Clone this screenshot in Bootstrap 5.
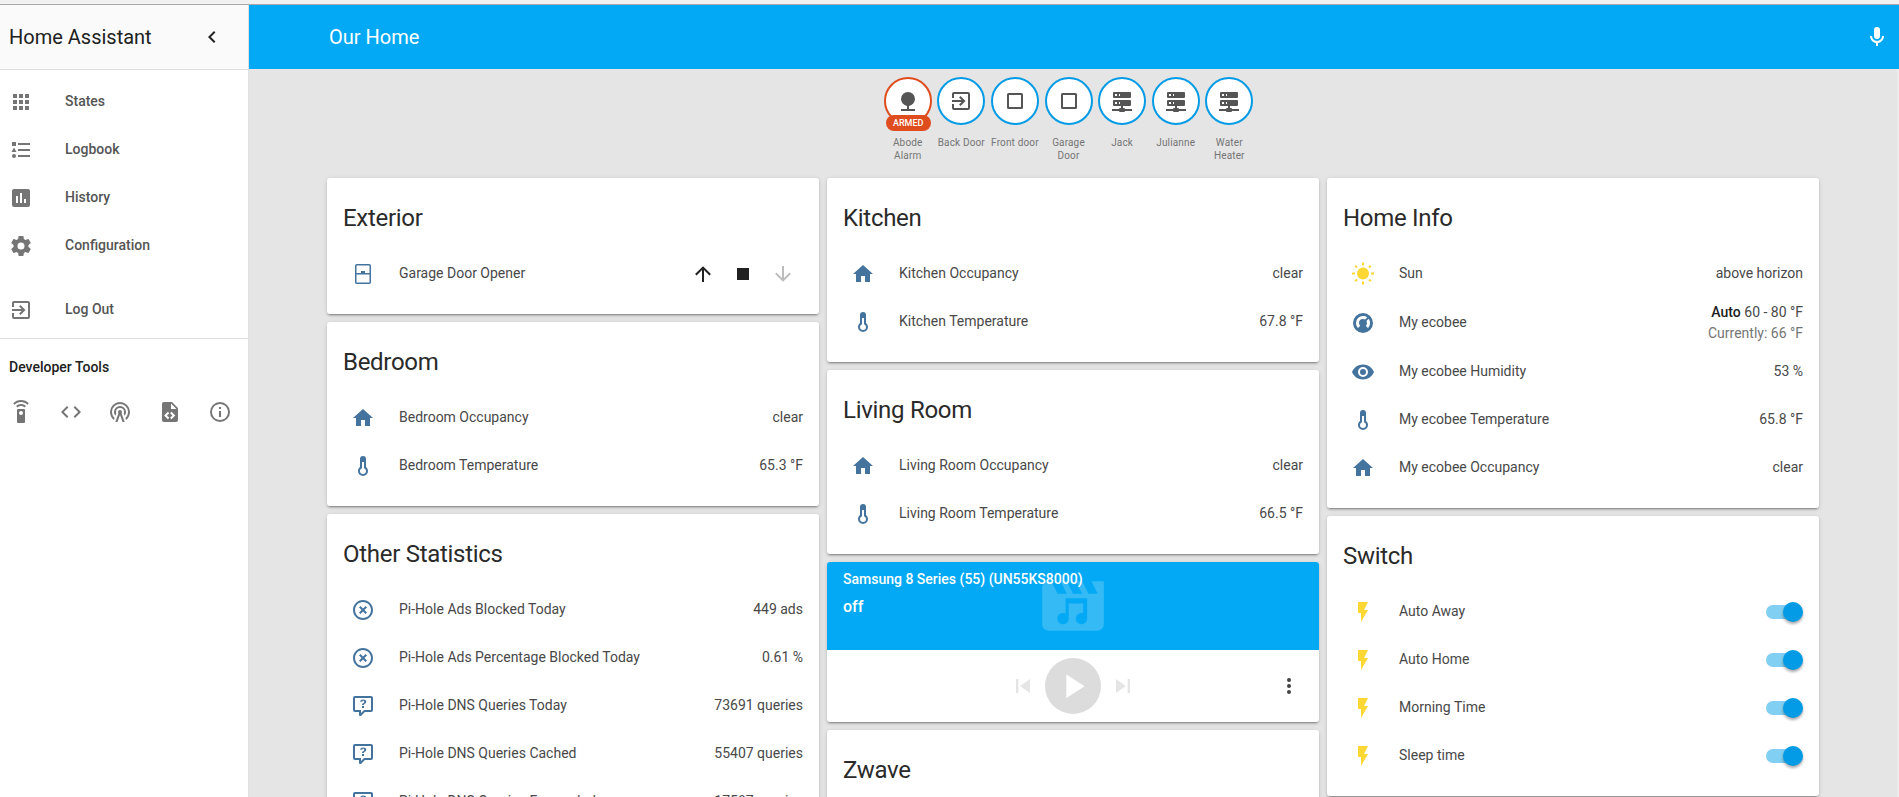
<!DOCTYPE html>
<html lang="en">
<head>
  <meta charset="UTF-8" />
  <meta name="viewport" content="width=device-width, initial-scale=1" />
  <title>Our Home - Home Assistant</title>
  <link href="https://cdn.jsdelivr.net/npm/bootstrap@5.3.3/dist/css/bootstrap.min.css" rel="stylesheet" />
  <style>
    html, body { height: 100%; overflow: hidden; }
    body { font-family: Roboto, "Liberation Sans", sans-serif; font-size: 14px; color: #212121; background: #e5e5e5; }
    .topline { height: 5px; background: #f1f1f1; border-bottom: 1px solid #a9a9a9; flex: none; }
    .shell { height: calc(100vh - 5px); }
    .ic { width: 24px; height: 24px; fill: currentColor; flex: none; display: block; }

    .side { width: 249px; flex: none; background: #fff; border-right: 1px solid #e0e0e0; }
    .side-head { height: 65px; background: #fafafa; border-bottom: 1px solid #e0e0e0; padding: 0 24px 0 9px; font-size: 20px; }
    .side-head .ic { color: #212121; }
    .side-nav { padding-top: 8px; }
    .nav-row { height: 48px; padding-left: 9px; color: #555; font-weight: 500; font-size: 14px; }
    .nav-row .ic { color: #757575; margin-right: 32px; }
    .nav-row span { margin-bottom: 2px; }
    .nav-gap { height: 16px; }
    .side-sep { border-top: 1px solid #e0e0e0; margin-top: 4px; }
    .dev-title { font-weight: 500; padding: 18px 9px 0; line-height: 20px; }
    .dev-icons { padding: 23px 0 0 9px; gap: 25.7px; color: #757575; }

    .main-pane { min-width: 0; }
    .blue-bar { height: 64px; background: #03a9f4; color: #fff; padding: 0 10px 0 80px; font-size: 20px; flex: none; }
    .pane-body { padding: 8px 78px 0 78px; border-right: 2px solid #ececec; flex-grow: 1; }

    .badge-row { gap: 5.6px; padding-right: 9px; margin-bottom: 16px; }
    .state-badge { width: 48px; text-align: center; }
    .badge-ring { width: 48px; height: 48px; border: 2px solid #039be5; border-radius: 50%; background: #fff; color: #555; position: relative; }
    .badge-ring.is-alarm { border-color: #df4c1e; }
    .badge-tag { position: absolute; left: 0; right: -1px; bottom: -8px; height: 16px; line-height: 16px; border-radius: 8px; background: #df4c1e; color: #fff; font-size: 9px; font-weight: 500; }
    .badge-name { font-size: 10px; line-height: 13px; letter-spacing: .15px; color: #757575; margin-top: 11px; }

    .col-wrap { gap: 8px; }
    .tile-col { width: 492px; flex: none; gap: 8px; }
    .tile { border: 0; border-radius: 3px; box-shadow: 0 2px 2px rgba(0,0,0,.14), 0 1px 5px rgba(0,0,0,.12), 0 3px 1px -2px rgba(0,0,0,.2); }
    .tile-title { font-size: 24px; line-height: 32px; letter-spacing: -.012em; padding: 24px 16px 16px; color: #2a2a2a; }
    .tile-body { padding: 0 16px 16px; color: #484848; }
    .ent-row { height: 48px; }
    .ent-row.is-tall { height: 50px; }
    .ent-row > span { margin-bottom: 2px; }
    .ent-icon { width: 40px; flex: none; color: #44739e; margin-right: 16px; }
    .ent-icon.is-yellow { color: #fdd835; }
    .ent-val { margin-left: auto; text-align: right; }
    .clim-val { line-height: 21px; }
    .clim-val b { font-weight: 500; color: #212121; }
    .clim-now { color: #757575; }
    .cover-btns { margin-left: auto; margin-right: 8px; gap: 16px; color: #212121; }
    .cover-btns .off { color: #bdbdbd; }

    .tog-track { width: 34px; height: 14px; border-radius: 7px; background: #81cff3; position: relative; margin-right: 3px; margin-left: auto; }
    .tog-thumb { position: absolute; right: -3px; top: -3px; width: 20px; height: 20px; border-radius: 50%; background: #039be5; box-shadow: 0 2px 3px rgba(0,0,0,.35); }

    .media-top { height: 88px; background: #03a9f4; color: #fff; padding: 8px 16px; position: relative; font-weight: 500; border-radius: 3px 3px 0 0; }
    .media-name { line-height: 18px; position: relative; }
    .media-state { font-size: 16px; line-height: 24px; margin-top: 7px; position: relative; }
    .media-art { position: absolute; left: 209px; top: 7px; width: 74px; height: 74px; fill: rgba(255,255,255,.2); }
    .media-ctl { height: 72px; position: relative; color: #e5e5e5; gap: 8px; }
    .media-ctl > .ic { width: 28px; height: 28px; }
    .play-disc { width: 56px; height: 56px; border-radius: 50%; background: #dcdcdc; color: #fff; }
    .play-disc .ic { width: 40px; height: 40px; }
    .media-ctl > .media-more { position: absolute; right: 18px; top: 24px; width: 24px; height: 24px; color: #424242; }
  </style>
</head>
<body class="d-flex flex-column">
  <svg width="0" height="0" class="position-absolute">
    <symbol id="i-apps" viewBox="0 0 24 24"><path d="M4,8H8V4H4V8M10,20H14V16H10V20M4,20H8V16H4V20M4,14H8V10H4V14M10,14H14V10H10V14M16,4V8H20V4H16M10,8H14V4H10V8M16,14H20V10H16V14M16,20H20V16H16V20Z"/></symbol>
    <symbol id="i-list" viewBox="0 0 24 24"><path d="M5,9.5L7.5,14H2.5L5,9.5M3,4H7V8H3V4M5,20A2,2 0 0,0 7,18A2,2 0 0,0 5,16A2,2 0 0,0 3,18A2,2 0 0,0 5,20M9,5V7H21V5H9M9,19H21V17H9V19M9,13H21V11H9V13Z"/></symbol>
    <symbol id="i-poll" viewBox="0 0 24 24"><path d="M17,17H15V13H17M13,17H11V7H13M9,17H7V10H9M19,3H5C3.89,3 3,3.89 3,5V19A2,2 0 0,0 5,21H19A2,2 0 0,0 21,19V5C21,3.89 20.1,3 19,3Z"/></symbol>
    <symbol id="i-gear" viewBox="0 0 24 24"><path d="M12,15.5A3.5,3.5 0 0,1 8.5,12A3.5,3.5 0 0,1 12,8.5A3.5,3.5 0 0,1 15.5,12A3.5,3.5 0 0,1 12,15.5M19.43,12.97C19.47,12.65 19.5,12.33 19.5,12C19.5,11.67 19.47,11.34 19.43,11L21.54,9.37C21.73,9.22 21.78,8.95 21.66,8.73L19.66,5.27C19.54,5.05 19.27,4.96 19.05,5.05L16.56,6.05C16.04,5.66 15.5,5.32 14.87,5.07L14.5,2.42C14.46,2.18 14.25,2 14,2H10C9.75,2 9.54,2.18 9.5,2.42L9.13,5.07C8.5,5.32 7.96,5.66 7.44,6.05L4.95,5.05C4.73,4.96 4.46,5.05 4.34,5.27L2.34,8.73C2.21,8.95 2.27,9.22 2.46,9.37L4.57,11C4.53,11.34 4.5,11.67 4.5,12C4.5,12.33 4.53,12.65 4.57,12.97L2.46,14.63C2.27,14.78 2.21,15.05 2.34,15.27L4.34,18.73C4.46,18.95 4.73,19.03 4.95,18.95L7.44,17.94C7.96,18.34 8.5,18.68 9.13,18.93L9.5,21.58C9.54,21.82 9.75,22 10,22H14C14.25,22 14.46,21.82 14.5,21.58L14.87,18.93C15.5,18.67 16.04,18.34 16.56,17.94L19.05,18.95C19.27,19.03 19.54,18.95 19.66,18.73L21.66,15.27C21.78,15.05 21.73,14.78 21.54,14.63L19.43,12.97Z"/></symbol>
    <symbol id="i-exit" viewBox="0 0 24 24"><path d="M19,3H5C3.89,3 3,3.89 3,5V9H5V5H19V19H5V15H3V19A2,2 0 0,0 5,21H19A2,2 0 0,0 21,19V5C21,3.89 20.1,3 19,3M10.08,15.58L11.5,17L16.5,12L11.5,7L10.08,8.41L12.67,11H3V13H12.67L10.08,15.58Z"/></symbol>
    <symbol id="i-remote" viewBox="0 0 24 24"><path d="M12,0C8.96,0 6.21,1.23 4.22,3.22L5.63,4.63C7.26,3 9.5,2 12,2C14.5,2 16.74,3 18.36,4.64L19.77,3.23C17.79,1.23 15.04,0 12,0M7.05,6.05L8.46,7.46C9.37,6.56 10.62,6 12,6C13.38,6 14.63,6.56 15.53,7.46L16.94,6.05C15.68,4.78 13.93,4 12,4C10.07,4 8.32,4.78 7.05,6.05M15,9H9A1,1 0 0,0 8,10V22A1,1 0 0,0 9,23H15A1,1 0 0,0 16,22V10A1,1 0 0,0 15,9M12,15A2,2 0 0,1 10,13A2,2 0 0,1 12,11A2,2 0 0,1 14,13A2,2 0 0,1 12,15Z"/></symbol>
    <symbol id="i-code" viewBox="0 0 24 24"><path d="M14.6,16.6L19.2,12L14.6,7.4L16,6L22,12L16,18L14.6,16.6M9.4,16.6L4.8,12L9.4,7.4L8,6L2,12L8,18L9.4,16.6Z"/></symbol>
    <symbol id="i-tower" viewBox="0 0 24 24"><path d="M12,10A2,2 0 0,1 14,12C14,12.5 13.82,12.94 13.53,13.29L16.7,22H14.57L12,14.93L9.43,22H7.3L10.47,13.29C10.18,12.94 10,12.5 10,12A2,2 0 0,1 12,10M12,8A4,4 0 0,0 8,12C8,12.5 8.1,13 8.28,13.46L7.4,15.86C6.53,14.81 6,13.47 6,12A6,6 0 0,1 12,6A6,6 0 0,1 18,12C18,13.47 17.47,14.81 16.6,15.86L15.72,13.46C15.9,13 16,12.5 16,12A4,4 0 0,0 12,8M12,4A8,8 0 0,0 4,12C4,14.36 5,16.5 6.64,17.94L5.92,19.94C3.54,18.11 2,15.23 2,12A10,10 0 0,1 12,2A10,10 0 0,1 22,12C22,15.23 20.46,18.11 18.08,19.94L17.36,17.94C19,16.5 20,14.36 20,12A8,8 0 0,0 12,4Z"/></symbol>
    <symbol id="i-filexml" viewBox="0 0 24 24"><path d="M13,9H18.5L13,3.5V9M6,2H14L20,8V20A2,2 0 0,1 18,22H6C4.89,22 4,21.1 4,20V4C4,2.89 4.89,2 6,2M6.12,15.5L9.86,19.24L11.28,17.83L8.95,15.5L11.28,13.17L9.86,11.76L6.12,15.5M17.28,15.5L13.54,11.76L12.12,13.17L14.45,15.5L12.12,17.83L13.54,19.24L17.28,15.5Z"/></symbol>
    <symbol id="i-info" viewBox="0 0 24 24"><path d="M11,9H13V7H11M12,20C7.59,20 4,16.41 4,12C4,7.59 7.59,4 12,4C16.41,4 20,7.59 20,12C20,16.41 16.41,20 12,20M12,2A10,10 0 0,0 2,12A10,10 0 0,0 12,22A10,10 0 0,0 22,12A10,10 0 0,0 12,2M11,17H13V11H11V17Z"/></symbol>
    <symbol id="i-chev" viewBox="0 0 24 24"><path d="M15.41,16.58L10.83,12L15.41,7.41L14,6L8,12L14,18L15.41,16.58Z"/></symbol>
    <symbol id="i-mic" viewBox="0 0 24 24"><path d="M12,2A3,3 0 0,1 15,5V11A3,3 0 0,1 12,14A3,3 0 0,1 9,11V5A3,3 0 0,1 12,2M19,11C19,14.53 16.39,17.44 13,17.93V21H11V17.93C7.61,17.44 5,14.53 5,11H7A5,5 0 0,0 12,16A5,5 0 0,0 17,11H19Z"/></symbol>
    <symbol id="i-cam" viewBox="0 0 24 24"><path d="M12,3A7,7 0 0,1 19,10A7,7 0 0,1 13,16.93V20H19V22H5V20H11V16.93A7,7 0 0,1 5,10A7,7 0 0,1 12,3Z"/></symbol>
    <symbol id="i-square" viewBox="0 0 24 24"><path d="M5.5,4H18.5A1.5,1.5 0 0,1 20,5.5V18.5A1.5,1.5 0 0,1 18.5,20H5.5A1.5,1.5 0 0,1 4,18.5V5.5A1.5,1.5 0 0,1 5.5,4M6,6V18H18V6H6Z"/></symbol>
    <symbol id="i-server" viewBox="0 0 24 24"><path d="M13,19H14A1,1 0 0,1 15,20H22V22H15A1,1 0 0,1 14,23H10A1,1 0 0,1 9,22H2V20H9A1,1 0 0,1 10,19H11V17H4A1,1 0 0,1 3,16V12A1,1 0 0,1 4,11H20A1,1 0 0,1 21,12V16A1,1 0 0,1 20,17H13V19M4,3H20A1,1 0 0,1 21,4V8A1,1 0 0,1 20,9H4A1,1 0 0,1 3,8V4A1,1 0 0,1 4,3M9,7H10V5H9V7M9,15H10V13H9V15M5,5V7H7V5H5M5,13V15H7V13H5Z"/></symbol>
    <symbol id="i-garage" viewBox="0 0 24 24"><rect x="4.75" y="2.75" width="14.5" height="18.5" rx="1" fill="none" stroke="currentColor" stroke-width="1.5"/><path d="M4,11H10V9H14V11H20V12.5H4Z"/></symbol>
    <symbol id="i-up" viewBox="0 0 24 24"><path d="M13,20H11V8L5.5,13.5L4.08,12.08L12,4.16L19.92,12.08L18.5,13.5L13,8V20Z"/></symbol>
    <symbol id="i-stop" viewBox="0 0 24 24"><path d="M18,18H6V6H18V18Z"/></symbol>
    <symbol id="i-down" viewBox="0 0 24 24"><path d="M11,4H13V16L18.5,10.5L19.92,11.92L12,19.84L4.08,11.92L5.5,10.5L11,16V4Z"/></symbol>
    <symbol id="i-home" viewBox="0 0 24 24"><path d="M10,20V14H14V20H19V12H22L12,3L2,12H5V20H10Z"/></symbol>
    <symbol id="i-temp" viewBox="0 0 24 24"><path d="M17,17A5,5 0 0,1 12,22A5,5 0 0,1 7,17C7,15.36 7.79,13.91 9,13V5A3,3 0 0,1 12,2A3,3 0 0,1 15,5V13C16.21,13.91 17,15.36 17,17M11,8V14.17C9.83,14.58 9,15.69 9,17A3,3 0 0,0 12,20A3,3 0 0,0 15,17C15,15.69 14.17,14.58 13,14.17V8H11Z"/></symbol>
    <symbol id="i-close" viewBox="0 0 24 24"><path d="M12,20C7.59,20 4,16.41 4,12C4,7.59 7.59,4 12,4C16.41,4 20,7.59 20,12C20,16.41 16.41,20 12,20M12,2C6.47,2 2,6.47 2,12C2,17.53 6.47,22 12,22C17.53,22 22,17.53 22,12C22,6.47 17.53,2 12,2M14.59,8L12,10.59L9.41,8L8,9.41L10.59,12L8,14.59L9.41,16L12,13.41L14.59,16L16,14.59L13.41,12L16,9.41L14.59,8Z"/></symbol>
    <symbol id="i-ask" viewBox="0 0 24 24"><path d="M4,2A2,2 0 0,0 2,4V16A2,2 0 0,0 4,18H8V21A1,1 0 0,0 9,22H9.5C9.75,22 10,21.9 10.2,21.71L13.9,18H20A2,2 0 0,0 22,16V4C22,2.89 21.1,2 20,2H4M4,4H20V16H13.08L10,19.08V16H4V4M12.19,5.5C11.3,5.5 10.59,5.68 10.05,6.04C9.5,6.4 9.22,7 9.27,7.69H11.24C11.24,7.41 11.34,7.2 11.5,7.06C11.7,6.92 11.92,6.85 12.19,6.85C12.5,6.85 12.77,6.93 12.95,7.11C13.13,7.28 13.22,7.5 13.22,7.8C13.22,8.08 13.14,8.33 13,8.54C12.83,8.76 12.62,8.94 12.36,9.08C11.84,9.4 11.5,9.68 11.29,9.92C11.1,10.16 11,10.5 11,11H13C13,10.72 13.05,10.5 13.14,10.32C13.23,10.15 13.4,10 13.66,9.85C14.12,9.64 14.5,9.36 14.79,9C15.08,8.63 15.23,8.24 15.23,7.8C15.23,7.1 14.95,6.54 14.4,6.12C13.85,5.71 13.11,5.5 12.19,5.5M11,12V14H13V12H11Z"/></symbol>
    <symbol id="i-sun" viewBox="0 0 24 24"><path d="M3.55,18.54L4.96,19.95L6.76,18.16L5.34,16.74M11,22.45H13V19.5H11M12,5.5A6,6 0 0,0 6,11.5A6,6 0 0,0 12,17.5A6,6 0 0,0 18,11.5C18,8.18 15.31,5.5 12,5.5M20,12.5H23V10.5H20M17.24,18.16L19.04,19.95L20.45,18.54L18.66,16.74M20.45,4.46L19.04,3.05L17.24,4.84L18.66,6.26M13,0.55H11V3.5H13M4,10.5H1V12.5H4M6.76,4.84L4.96,3.05L3.55,4.46L5.34,6.26L6.76,4.84Z"/></symbol>
    <symbol id="i-nest" viewBox="0 0 24 24"><path d="M16.95,16.95L14.83,14.83C15.55,14.1 16,13.1 16,12C16,11.26 15.79,10.57 15.43,10L17.6,7.81C18.5,9 19,10.43 19,12C19,13.93 18.22,15.68 16.95,16.95M12,5C13.57,5 15,5.5 16.19,6.4L14,8.56C13.43,8.21 12.74,8 12,8A4,4 0 0,0 8,12C8,13.1 8.45,14.1 9.17,14.83L7.05,16.95C5.78,15.68 5,13.93 5,12A7,7 0 0,1 12,5M12,2A10,10 0 0,0 2,12A10,10 0 0,0 12,22A10,10 0 0,0 22,12A10,10 0 0,0 12,2Z"/></symbol>
    <symbol id="i-eye" viewBox="0 0 24 24"><path d="M12,9A3,3 0 0,0 9,12A3,3 0 0,0 12,15A3,3 0 0,0 15,12A3,3 0 0,0 12,9M12,17A5,5 0 0,1 7,12A5,5 0 0,1 12,7A5,5 0 0,1 17,12A5,5 0 0,1 12,17M12,4.5C7,4.5 2.73,7.61 1,12C2.73,16.39 7,19.5 12,19.5C17,19.5 21.27,16.39 23,12C21.27,7.61 17,4.5 12,4.5Z"/></symbol>
    <symbol id="i-flash" viewBox="0 0 24 24"><path d="M7,2V13H10V22L17,10H13L17,2H7Z"/></symbol>
    <symbol id="i-prev" viewBox="0 0 24 24"><path d="M6,18V6H8V18H6M9.5,12L18,6V18L9.5,12Z"/></symbol>
    <symbol id="i-next" viewBox="0 0 24 24"><path d="M16,18H18V6H16M6,18L14.5,12L6,6V18Z"/></symbol>
    <symbol id="i-play" viewBox="0 0 24 24"><path d="M8,5.14V19.14L19,12.14L8,5.14Z"/></symbol>
    <symbol id="i-dots" viewBox="0 0 24 24"><path d="M12,16A2,2 0 0,1 14,18A2,2 0 0,1 12,20A2,2 0 0,1 10,18A2,2 0 0,1 12,16M12,10A2,2 0 0,1 14,12A2,2 0 0,1 12,14A2,2 0 0,1 10,12A2,2 0 0,1 12,10M12,4A2,2 0 0,1 14,6A2,2 0 0,1 12,8A2,2 0 0,1 10,6A2,2 0 0,1 12,4Z"/></symbol>
  </svg>

  <div class="topline"></div>
  <div class="shell d-flex">
    <aside class="side">
      <div class="side-head d-flex align-items-center justify-content-between">
        <span>Home Assistant</span>
        <svg class="ic"><use href="#i-chev"/></svg>
      </div>
      <div class="side-nav">
        <div class="nav-row d-flex align-items-center"><svg class="ic"><use href="#i-apps"/></svg><span>States</span></div>
        <div class="nav-row d-flex align-items-center"><svg class="ic"><use href="#i-list"/></svg><span>Logbook</span></div>
        <div class="nav-row d-flex align-items-center"><svg class="ic"><use href="#i-poll"/></svg><span>History</span></div>
        <div class="nav-row d-flex align-items-center"><svg class="ic"><use href="#i-gear"/></svg><span>Configuration</span></div>
        <div class="nav-gap"></div>
        <div class="nav-row d-flex align-items-center"><svg class="ic"><use href="#i-exit"/></svg><span>Log Out</span></div>
      </div>
      <div class="side-sep"></div>
      <div class="dev-title">Developer Tools</div>
      <div class="dev-icons d-flex">
        <svg class="ic"><use href="#i-remote"/></svg>
        <svg class="ic"><use href="#i-code"/></svg>
        <svg class="ic"><use href="#i-tower"/></svg>
        <svg class="ic"><use href="#i-filexml"/></svg>
        <svg class="ic"><use href="#i-info"/></svg>
      </div>
    </aside>

    <div class="main-pane flex-grow-1 d-flex flex-column">
      <div class="blue-bar d-flex align-items-center justify-content-between">
        <span>Our Home</span>
        <svg class="ic"><use href="#i-mic"/></svg>
      </div>
      <div class="pane-body">
        <div class="badge-row d-flex justify-content-center">
          <div class="state-badge">
            <div class="badge-ring is-alarm d-flex align-items-center justify-content-center">
              <svg class="ic"><use href="#i-cam"/></svg>
              <span class="badge-tag">ARMED</span>
            </div>
            <div class="badge-name">Abode Alarm</div>
          </div>
          <div class="state-badge">
            <div class="badge-ring d-flex align-items-center justify-content-center"><svg class="ic"><use href="#i-exit"/></svg></div>
            <div class="badge-name">Back Door</div>
          </div>
          <div class="state-badge">
            <div class="badge-ring d-flex align-items-center justify-content-center"><svg class="ic"><use href="#i-square"/></svg></div>
            <div class="badge-name">Front door</div>
          </div>
          <div class="state-badge">
            <div class="badge-ring d-flex align-items-center justify-content-center"><svg class="ic"><use href="#i-square"/></svg></div>
            <div class="badge-name">Garage Door</div>
          </div>
          <div class="state-badge">
            <div class="badge-ring d-flex align-items-center justify-content-center"><svg class="ic"><use href="#i-server"/></svg></div>
            <div class="badge-name">Jack</div>
          </div>
          <div class="state-badge">
            <div class="badge-ring d-flex align-items-center justify-content-center"><svg class="ic"><use href="#i-server"/></svg></div>
            <div class="badge-name">Julianne</div>
          </div>
          <div class="state-badge">
            <div class="badge-ring d-flex align-items-center justify-content-center"><svg class="ic"><use href="#i-server"/></svg></div>
            <div class="badge-name">Water Heater</div>
          </div>
        </div>

        <div class="col-wrap d-flex align-items-start">
          <div class="tile-col d-flex flex-column">
            <div class="card tile">
              <div class="tile-title">Exterior</div>
              <div class="tile-body">
                <div class="ent-row d-flex align-items-center">
                  <div class="ent-icon d-flex justify-content-center"><svg class="ic"><use href="#i-garage"/></svg></div>
                  <span>Garage Door Opener</span>
                  <div class="cover-btns d-flex">
                    <svg class="ic"><use href="#i-up"/></svg>
                    <svg class="ic"><use href="#i-stop"/></svg>
                    <svg class="ic off"><use href="#i-down"/></svg>
                  </div>
                </div>
              </div>
            </div>
            <div class="card tile">
              <div class="tile-title">Bedroom</div>
              <div class="tile-body">
                <div class="ent-row d-flex align-items-center">
                  <div class="ent-icon d-flex justify-content-center"><svg class="ic"><use href="#i-home"/></svg></div>
                  <span>Bedroom Occupancy</span><span class="ent-val">clear</span>
                </div>
                <div class="ent-row d-flex align-items-center">
                  <div class="ent-icon d-flex justify-content-center"><svg class="ic"><use href="#i-temp"/></svg></div>
                  <span>Bedroom Temperature</span><span class="ent-val">65.3 °F</span>
                </div>
              </div>
            </div>
            <div class="card tile">
              <div class="tile-title">Other Statistics</div>
              <div class="tile-body">
                <div class="ent-row d-flex align-items-center">
                  <div class="ent-icon d-flex justify-content-center"><svg class="ic"><use href="#i-close"/></svg></div>
                  <span>Pi-Hole Ads Blocked Today</span><span class="ent-val">449 ads</span>
                </div>
                <div class="ent-row d-flex align-items-center">
                  <div class="ent-icon d-flex justify-content-center"><svg class="ic"><use href="#i-close"/></svg></div>
                  <span>Pi-Hole Ads Percentage Blocked Today</span><span class="ent-val">0.61 %</span>
                </div>
                <div class="ent-row d-flex align-items-center">
                  <div class="ent-icon d-flex justify-content-center"><svg class="ic"><use href="#i-ask"/></svg></div>
                  <span>Pi-Hole DNS Queries Today</span><span class="ent-val">73691 queries</span>
                </div>
                <div class="ent-row d-flex align-items-center">
                  <div class="ent-icon d-flex justify-content-center"><svg class="ic"><use href="#i-ask"/></svg></div>
                  <span>Pi-Hole DNS Queries Cached</span><span class="ent-val">55407 queries</span>
                </div>
                <div class="ent-row d-flex align-items-center">
                  <div class="ent-icon d-flex justify-content-center"><svg class="ic"><use href="#i-ask"/></svg></div>
                  <span>Pi-Hole DNS Queries Forwarded</span><span class="ent-val">17587 queries</span>
                </div>
              </div>
            </div>
          </div>

          <div class="tile-col d-flex flex-column">
            <div class="card tile">
              <div class="tile-title">Kitchen</div>
              <div class="tile-body">
                <div class="ent-row d-flex align-items-center">
                  <div class="ent-icon d-flex justify-content-center"><svg class="ic"><use href="#i-home"/></svg></div>
                  <span>Kitchen Occupancy</span><span class="ent-val">clear</span>
                </div>
                <div class="ent-row d-flex align-items-center">
                  <div class="ent-icon d-flex justify-content-center"><svg class="ic"><use href="#i-temp"/></svg></div>
                  <span>Kitchen Temperature</span><span class="ent-val">67.8 °F</span>
                </div>
              </div>
            </div>
            <div class="card tile">
              <div class="tile-title">Living Room</div>
              <div class="tile-body">
                <div class="ent-row d-flex align-items-center">
                  <div class="ent-icon d-flex justify-content-center"><svg class="ic"><use href="#i-home"/></svg></div>
                  <span>Living Room Occupancy</span><span class="ent-val">clear</span>
                </div>
                <div class="ent-row d-flex align-items-center">
                  <div class="ent-icon d-flex justify-content-center"><svg class="ic"><use href="#i-temp"/></svg></div>
                  <span>Living Room Temperature</span><span class="ent-val">66.5 °F</span>
                </div>
              </div>
            </div>
            <div class="card tile">
              <div class="media-top">
                <svg class="media-art" viewBox="0 0 24 24"><path fill-rule="evenodd" d="M18,4L20,8H17L15,4H13L15,8H12L10,4H8L10,8H7L5,4H4A2,2 0 0,0 2,6V18A2,2 0 0,0 4,20H20A2,2 0 0,0 22,18V4H18ZM9.6,9.5H16.6V16.1A1.85,1.85 0 1,1 15.3,14.33V11.2H10.6V16.1A1.85,1.85 0 1,1 9.6,14.46V9.5Z"/></svg>
                <div class="media-name">Samsung 8 Series (55) (UN55KS8000)</div>
                <div class="media-state">off</div>
              </div>
              <div class="media-ctl d-flex align-items-center justify-content-center">
                <svg class="ic"><use href="#i-prev"/></svg>
                <div class="play-disc d-flex align-items-center justify-content-center"><svg class="ic"><use href="#i-play"/></svg></div>
                <svg class="ic"><use href="#i-next"/></svg>
                <svg class="ic media-more"><use href="#i-dots"/></svg>
              </div>
            </div>
            <div class="card tile">
              <div class="tile-title">Zwave</div>
              <div class="tile-body">
                <div class="ent-row"></div>
              </div>
            </div>
          </div>

          <div class="tile-col d-flex flex-column">
            <div class="card tile">
              <div class="tile-title">Home Info</div>
              <div class="tile-body">
                <div class="ent-row d-flex align-items-center">
                  <div class="ent-icon is-yellow d-flex justify-content-center"><svg class="ic"><use href="#i-sun"/></svg></div>
                  <span>Sun</span><span class="ent-val">above horizon</span>
                </div>
                <div class="ent-row is-tall d-flex align-items-center">
                  <div class="ent-icon d-flex justify-content-center"><svg class="ic"><use href="#i-nest"/></svg></div>
                  <span>My ecobee</span>
                  <div class="ent-val clim-val">
                    <div><b>Auto</b> 60 - 80 °F</div>
                    <div class="clim-now">Currently: 66 °F</div>
                  </div>
                </div>
                <div class="ent-row d-flex align-items-center">
                  <div class="ent-icon d-flex justify-content-center"><svg class="ic"><use href="#i-eye"/></svg></div>
                  <span>My ecobee Humidity</span><span class="ent-val">53 %</span>
                </div>
                <div class="ent-row d-flex align-items-center">
                  <div class="ent-icon d-flex justify-content-center"><svg class="ic"><use href="#i-temp"/></svg></div>
                  <span>My ecobee Temperature</span><span class="ent-val">65.8 °F</span>
                </div>
                <div class="ent-row d-flex align-items-center">
                  <div class="ent-icon d-flex justify-content-center"><svg class="ic"><use href="#i-home"/></svg></div>
                  <span>My ecobee Occupancy</span><span class="ent-val">clear</span>
                </div>
              </div>
            </div>
            <div class="card tile">
              <div class="tile-title">Switch</div>
              <div class="tile-body">
                <div class="ent-row d-flex align-items-center">
                  <div class="ent-icon is-yellow d-flex justify-content-center"><svg class="ic"><use href="#i-flash"/></svg></div>
                  <span>Auto Away</span><div class="tog-track"><span class="tog-thumb"></span></div>
                </div>
                <div class="ent-row d-flex align-items-center">
                  <div class="ent-icon is-yellow d-flex justify-content-center"><svg class="ic"><use href="#i-flash"/></svg></div>
                  <span>Auto Home</span><div class="tog-track"><span class="tog-thumb"></span></div>
                </div>
                <div class="ent-row d-flex align-items-center">
                  <div class="ent-icon is-yellow d-flex justify-content-center"><svg class="ic"><use href="#i-flash"/></svg></div>
                  <span>Morning Time</span><div class="tog-track"><span class="tog-thumb"></span></div>
                </div>
                <div class="ent-row d-flex align-items-center">
                  <div class="ent-icon is-yellow d-flex justify-content-center"><svg class="ic"><use href="#i-flash"/></svg></div>
                  <span>Sleep time</span><div class="tog-track"><span class="tog-thumb"></span></div>
                </div>
              </div>
            </div>
          </div>
        </div>
      </div>
    </div>
  </div>
  <script src="https://cdn.jsdelivr.net/npm/bootstrap@5.3.3/dist/js/bootstrap.bundle.min.js"></script>
</body>
</html>
